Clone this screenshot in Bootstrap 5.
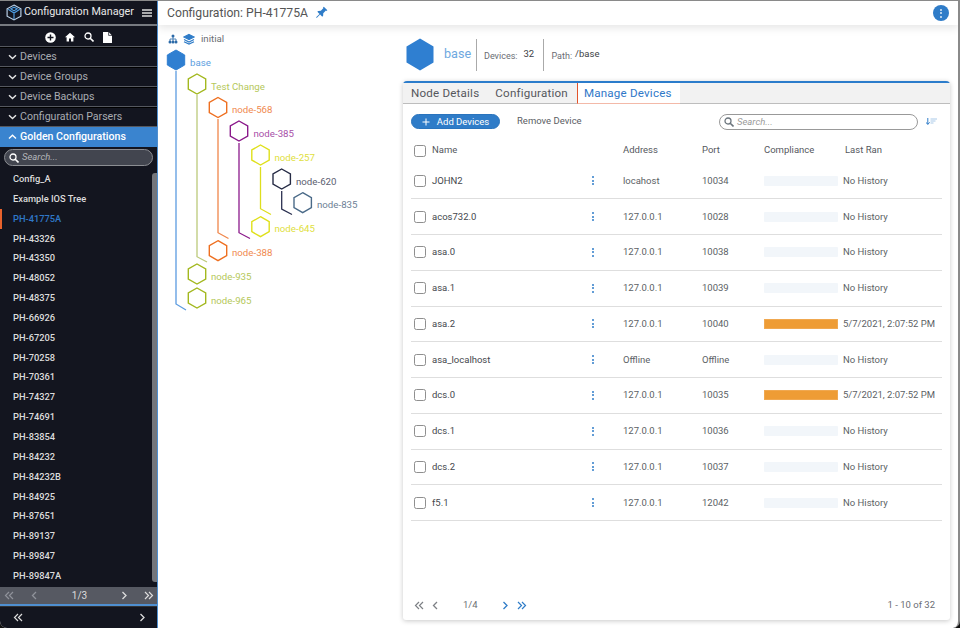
<!DOCTYPE html>
<html lang="en"><head><meta charset="utf-8"><title>Configuration Manager</title>
<link href="https://cdn.jsdelivr.net/npm/bootstrap@5.3.0/dist/css/bootstrap.min.css" rel="stylesheet">
<style>
html,body{height:628px;overflow:hidden;background:#111}
body{font-family:Roboto,"Liberation Sans",sans-serif;color:#4a4d55}
.app-shell{height:628px;width:960px;border-radius:0 0 7px 7px;overflow:hidden;background:#fff;border-top:1px solid #8a8a8a;border-right:2px solid #8a8a8a}
.side{width:158px;flex:none;background:#13151f;color:#e6e6e6;border-right:1px solid #4f8fd0}
.side-title{height:23px;padding:0 5px 0 6px;border-bottom:2px solid #777a80;font-size:10.8px;color:#e8e8e8;box-sizing:content-box}
.logo-ic{margin-right:2px;flex:none}
.side-tools{height:20px;border-bottom:1px solid #55585f;margin-top:1px;gap:9px;padding-top:1px}
.acc{height:20px;padding-left:8px;gap:3px;font-size:10.6px;color:#a9acb2;border-bottom:1px solid #55585f;border-top:1px solid #000}
.acc-on{background:#3a84cf;color:#fff;font-weight:500;border-color:#3a84cf}
.side-search{margin:2px 4px 0;height:17px;border:1px solid #8b8d92;border-radius:9px;background:#42454f;padding-left:4px;gap:3px;font-size:9.5px;font-style:italic;color:#b4b6ba}
.side-body{flex:1;min-height:0;position:relative}
.tree-list{padding-top:3px;background:transparent}
.tree-list .list-group-item{background:transparent;border:0;border-radius:0;color:#dcdcdc;font-size:9.3px;font-weight:500;height:19.85px;line-height:19.85px;padding:0 0 0 13px}
.tree-list .list-group-item.active{color:#2f78c8;box-shadow:inset 2px 0 0 #e8622c;margin:0}
.thumb{position:absolute;right:0;top:7px;width:5px;bottom:5px;background:#74767b;border-radius:3px 0 0 3px}
.side-pager{height:17px;background:#565962;font-size:10px;color:#ddd;border-bottom:2px solid #4f8fd0;box-sizing:content-box;padding:0 3px 0 4px}
.pg-gap-a{margin-left:17px}.pg-gap-b{margin-left:auto}.pg-gap-c{margin-left:auto}.pg-gap-d{margin-left:16px}
.side-foot{height:22px;padding:0 11px 0 13px;color:#ddd;border-top:1px solid #333}
.dim{color:#8f929a}
.main-area{min-width:0;position:relative}
.top-bar{height:24px;padding:0 9px;box-shadow:0 3px 8px rgba(0,0,0,.1);font-size:12.2px;color:#555;position:relative;z-index:2}
.pin-ic{margin-left:6px}
.kebab-btn{width:16px;height:16px;border-radius:50%;background:#2f7cc8;gap:1.5px}
.kebab-btn i,.kebab i{display:block;width:2px;height:2px;border-radius:50%}
.kebab-btn i{background:#dce9f6}
.kebab{gap:1.5px;width:2px;margin-left:5px}.kebab i{background:#2f7cc8}
.work{flex:1;min-height:0}
.tree-pane{width:245px;flex:none}
.detail{width:547px;margin-left:0;padding-top:13px}
.node-head{height:33px;margin-bottom:10px;margin-left:3px;font-size:9px;color:#6a6d73}
.node-name{font-size:12.6px;color:#6ea8e0;margin-left:10px;width:32px}
.vsep{width:1px;height:32px;background:#aaa}
.node-lab{padding-top:4px;margin:0 6px 0 7px}
.node-lab-b{margin:0 3px 0 7px;padding-top:4px}
.node-val{color:#3d3f45;font-size:9.5px}
.val-wide{width:20px}
.panel-card{height:539px;border:0;border-top:2px solid #2b7ccb;border-radius:4px 4px 3px 3px;box-shadow:0 1px 5px rgba(0,0,0,.22)}
.tab-strip{height:21px;background:#f2f2f2;border-bottom:1px solid #bdbdbd;font-size:11.6px;color:#55575c;letter-spacing:.2px}
.tab-strip .nav-link{color:#55575c;padding:0;line-height:20px;border:0;border-radius:0;background:transparent;height:20px;font-size:inherit}
.tab-strip .nav-link.active{color:#2f78c8;background:#fff;border-left:1px solid #e2542c;padding:0 8px 0 6px;border-bottom:1px solid #f3b9a8;margin-bottom:-1px;height:21px}
.tab-b{margin-left:16px}.tab-c{margin-left:9px}
.tools{padding:10px 8px 0 8px;height:34px}
.add-btn{height:15px;width:89px;background:#2f7cc8;color:#fff;font-size:9.5px;padding:0;border:1px solid #2a74bd;border-radius:8px;line-height:13px;gap:7px}
.link-btn{font-size:9.5px;color:#5a5d63;margin-left:17px}
.find{width:199px;height:16px;margin-left:auto;border:1px solid #999;border-radius:8px;padding-left:4px;gap:3px;font-size:9.5px;font-style:italic;color:#9a9a9a}
.sort-ic{margin:0 5px 0 8px}
.dev-table{width:531px;table-layout:fixed;margin:0 0 0 8px;font-size:9.5px;color:#5c5f65}
.dev-table th,.dev-table td{padding:0;vertical-align:middle;background:transparent;color:inherit}
.dev-table thead th{height:25px;font-weight:400;color:#55585e;border:0;font-size:9.5px}
.dev-table tbody td{height:35.75px;border-bottom:1px solid #dedede}
.dev-table .nm{color:#44474d}
.dev-table .ran-head{padding-left:2px}
.c1{width:21px}.c2{width:155px}.c3{width:36px}.c4{width:79px}.c5{width:62px}.c6{width:79px}.c7{width:99px}
.cbx{width:12px;height:12px;margin:0 0 0 3px;display:block;border:1px solid #8f8f8f;border-radius:2px;background:#fff;box-shadow:none}
.meter{height:10px;width:74px;background:#f2f6fa;border-radius:1px}
.meter .progress-bar{background:#ee9c35;box-shadow:inset 0 0 0 1px #f0a850}
.pager{margin-top:auto;padding:0 15px 0 11px;font-size:9.5px;color:#6a6d73;height:30px}
.pg-a{color:#7d8085}.pg-b{color:#2f7cc8}
.pg-m{margin-left:24px}.pg-n{margin-left:24px}
.tree-svg{display:block}
.tree-svg text{font-family:Roboto,"Liberation Sans",sans-serif;font-size:9.7px}
</style></head>
<body>
<svg width="0" height="0" class="position-absolute"><defs>
<path id="hx" d="M0-10 8.700-5V5L0 10-8.700 5V-5Z"/>
<path id="chev-d" d="M1 1.200 4.500 4.500 8 1.200" fill="none" stroke="currentColor" stroke-width="1.400"/>
<path id="chev-u" d="M1 4.500 4.500 1.200 8 4.500" fill="none" stroke="currentColor" stroke-width="1.400"/>
<g id="glass" fill="none" stroke="currentColor" stroke-width="1.300"><circle cx="4" cy="4" r="3"/><path d="M6.200 6.200 9.500 9.500" stroke-width="1.600"/></g>
<path id="dbl-l" d="M5 1 1.500 4.500 5 8M9 1 5.500 4.500 9 8" fill="none" stroke="currentColor" stroke-width="1.200"/>
<path id="dbl-r" d="M1 1 4.500 4.500 1 8M5 1 8.500 4.500 5 8" fill="none" stroke="currentColor" stroke-width="1.200"/>
<path id="one-l" d="M5 1 1.500 4.500 5 8" fill="none" stroke="currentColor" stroke-width="1.300"/>
<path id="one-r" d="M1.500 1 5 4.500 1.500 8" fill="none" stroke="currentColor" stroke-width="1.300"/>
</defs></svg>
<div class="app-shell d-flex">
<aside class="side d-flex flex-column">
  <div class="side-title d-flex align-items-center">
    <svg width="16" height="17" viewBox="0 0 15 16" class="logo-ic"><path d="M7.500 1 14 4.500V11.500L7.500 15 1 11.500V4.500Z" fill="none" stroke="#bcd3ea" stroke-width="1.100"/><path d="M2 5 7.500 8.500 13 5M7.500 8.500V14M4.500 4.500 7.500 3 10.500 4.500 7.500 6.500Z" fill="none" stroke="#4d9ce0" stroke-width="1.100"/></svg>
    <span class="flex-grow-1 text-nowrap">Configuration Manager</span>
    <svg width="10" height="8" viewBox="0 0 10 8"><path d="M0 1H10M0 4H10M0 7H10" stroke="#ddd" stroke-width="1.400"/></svg>
  </div>
  <div class="side-tools d-flex align-items-center justify-content-center">
    <svg width="11" height="11" viewBox="0 0 11 11"><circle cx="5.500" cy="5.500" r="5.300" fill="#fff"/><path d="M5.500 2.500V8.500M2.500 5.500H8.500" stroke="#13151f" stroke-width="1.400"/></svg>
    <svg width="10" height="10" viewBox="0 0 10 10"><path d="M5 .8 0 5.300H1.600V9.500H4V6.500H6V9.500H8.400V5.300H10Z" fill="#fff"/></svg>
    <svg width="10" height="10" viewBox="0 0 10 10" class="text-white"><use href="#glass"/></svg>
    <svg width="9" height="11" viewBox="0 0 9 11"><path d="M0 0H5.600L9 3.400V11H0Z" fill="#fff"/><path d="M5.600 0V3.400H9" fill="none" stroke="#13151f" stroke-width=".7"/></svg>
  </div>
  <div class="acc d-flex align-items-center"><svg width="9" height="6" viewBox="0 0 9 6"><use href="#chev-d" color="#e6e6e6"/></svg>Devices</div>
  <div class="acc d-flex align-items-center"><svg width="9" height="6" viewBox="0 0 9 6"><use href="#chev-d" color="#e6e6e6"/></svg>Device Groups</div>
  <div class="acc d-flex align-items-center"><svg width="9" height="6" viewBox="0 0 9 6"><use href="#chev-d" color="#e6e6e6"/></svg>Device Backups</div>
  <div class="acc d-flex align-items-center"><svg width="9" height="6" viewBox="0 0 9 6"><use href="#chev-d" color="#e6e6e6"/></svg><span class="text-nowrap">Configuration Parsers</span></div>
  <div class="acc acc-on d-flex align-items-center"><svg width="9" height="6" viewBox="0 0 9 6"><use href="#chev-u"/></svg><span class="text-nowrap">Golden Configurations</span></div>
  <div class="side-search d-flex align-items-center"><svg width="10" height="10" viewBox="0 0 10 10" class="text-white"><use href="#glass"/></svg>Search...</div>
  <div class="side-body">
    <div class="thumb"></div>
    <div class="list-group tree-list">
      <a class="list-group-item">Config_A</a><a class="list-group-item">Example IOS Tree</a><a class="list-group-item active">PH-41775A</a>
      <a class="list-group-item">PH-43326</a><a class="list-group-item">PH-43350</a><a class="list-group-item">PH-48052</a><a class="list-group-item">PH-48375</a>
      <a class="list-group-item">PH-66926</a><a class="list-group-item">PH-67205</a><a class="list-group-item">PH-70258</a><a class="list-group-item">PH-70361</a>
      <a class="list-group-item">PH-74327</a><a class="list-group-item">PH-74691</a><a class="list-group-item">PH-83854</a><a class="list-group-item">PH-84232</a>
      <a class="list-group-item">PH-84232B</a><a class="list-group-item">PH-84925</a><a class="list-group-item">PH-87651</a><a class="list-group-item">PH-89137</a>
      <a class="list-group-item">PH-89847</a><a class="list-group-item">PH-89847A</a>
    </div>
  </div>
  <div class="side-pager d-flex align-items-center">
    <svg width="10" height="9" viewBox="0 0 10 9" class="dim"><use href="#dbl-l"/></svg>
    <svg width="7" height="9" viewBox="0 0 7 9" class="dim pg-gap-a"><use href="#one-l"/></svg>
    <span class="pg-gap-b">1/3</span>
    <svg width="7" height="9" viewBox="0 0 7 9" class="pg-gap-c"><use href="#one-r"/></svg>
    <svg width="10" height="9" viewBox="0 0 10 9" class="pg-gap-d"><use href="#dbl-r"/></svg>
  </div>
  <div class="side-foot d-flex align-items-center justify-content-between">
    <svg width="10" height="9" viewBox="0 0 10 9"><use href="#dbl-l"/></svg>
    <svg width="7" height="9" viewBox="0 0 7 9"><use href="#one-r"/></svg>
  </div>
</aside>
<main class="main-area flex-grow-1 d-flex flex-column">
  <header class="top-bar d-flex align-items-center bg-white">
    <span>Configuration: PH-41775A</span>
    <svg width="14" height="14" viewBox="0 0 14 14" class="pin-ic"><g transform="rotate(45 7 7)"><path d="M4.500 .5H9.500V1.800H8.700V5.500L10.500 7.500V8.700H7.400V13.500H6.600V8.700H3.500V7.500L5.300 5.500V1.800H4.500Z" fill="#2f7cc8"/></g></svg>
    <div class="kebab-btn d-flex flex-column align-items-center justify-content-center ms-auto"><i></i><i></i><i></i></div>
  </header>
  <div class="work d-flex">
    <div class="tree-pane">
      <svg class="tree-svg" width="245" height="310" viewBox="158 25 245 310">
        <g fill="none" stroke-width="1.300">
          <path d="M176 71V304L186 310" stroke="#5b9be0"/>
          <path d="M197 95V256.700L207 262" stroke="#bcc97a"/>
          <path d="M218 119V232.700L228.500 238.500" stroke="#f0864a"/>
          <path d="M239 143V232.700L250 238.500" stroke="#8b1a8b"/>
          <path d="M260.500 167V208.700L271 214.500" stroke="#dede1e"/>
          <path d="M281.700 191V209L292 214.500" stroke="#2a3050"/>
        </g>
        <g fill="#2b6aa8"><circle cx="173" cy="36" r="1.500"/><circle cx="170" cy="42" r="1.500"/><circle cx="173" cy="42" r="1.500"/><circle cx="176" cy="42" r="1.500"/></g>
        <path d="M173 36V42M173 39H170V42M173 39H176V42" stroke="#2b6aa8" fill="none" stroke-width=".8"/>
        <g fill="none" stroke="#2f7cc8" stroke-width="1.200"><path d="M189 34.500 194 37 189 39.500 184 37Z" fill="#2f7cc8"/><path d="M184 39.500 189 42 194 39.500M184 41.700 189 44 194 41.700"/></g>
        <text x="201" y="42" fill="#6a6d73">initial</text>
        <use href="#hx" transform="translate(176 60)" fill="#2f7fd1" stroke="#2f7fd1"/>
        <g fill="#fff" stroke-width="1.400">
          <use href="#hx" transform="translate(197 84)" stroke="#a3b81f"/>
          <use href="#hx" transform="translate(218 107.500)" stroke="#ee6f20"/>
          <use href="#hx" transform="translate(239 131)" stroke="#8b1a8b"/>
          <use href="#hx" transform="translate(260.500 155)" stroke="#dfe01a"/>
          <use href="#hx" transform="translate(281.700 179)" stroke="#262b45"/>
          <use href="#hx" transform="translate(302.700 202.700)" stroke="#4a6a88"/>
          <use href="#hx" transform="translate(260.500 226.700)" stroke="#dfe01a"/>
          <use href="#hx" transform="translate(218 250.700)" stroke="#ee6f20"/>
          <use href="#hx" transform="translate(197 274)" stroke="#a3b81f"/>
          <use href="#hx" transform="translate(197 298)" stroke="#a3b81f"/>
        </g>
        <text x="190" y="65.500" fill="#5b9ee0">base</text>
        <text x="211" y="89.500" fill="#b5c85a">Test Change</text>
        <text x="232" y="113" fill="#f08a50">node-568</text>
        <text x="253.500" y="136.500" fill="#a84fa8">node-385</text>
        <text x="274.500" y="160.500" fill="#e0e040">node-257</text>
        <text x="296" y="184.500" fill="#5c6070">node-620</text>
        <text x="317" y="208.200" fill="#6d8196">node-835</text>
        <text x="274.500" y="232.200" fill="#e0e040">node-645</text>
        <text x="232" y="256.200" fill="#f08a50">node-388</text>
        <text x="211" y="279.500" fill="#b5c85a">node-935</text>
        <text x="211" y="303.500" fill="#b5c85a">node-965</text>
      </svg>
    </div>
    <section class="detail d-flex flex-column">
      <div class="node-head d-flex align-items-center">
        <svg width="28" height="33" viewBox="0 0 28 33"><path d="M14 .500 27.500 8.500V24.500L14 32.500 .5 24.500V8.500Z" fill="#2f7fd1"/></svg>
        <span class="node-name">base</span>
        <span class="vsep"></span>
        <span class="node-lab">Devices:</span><span class="node-val val-wide">32</span>
        <span class="vsep"></span>
        <span class="node-lab-b">Path:</span><span class="node-val">/base</span>
      </div>
      <div class="card panel-card">
        <ul class="nav tab-strip">
          <li class="nav-item ms-2"><a class="nav-link">Node Details</a></li>
          <li class="nav-item tab-b"><a class="nav-link">Configuration</a></li>
          <li class="nav-item tab-c"><a class="nav-link active">Manage Devices</a></li>
        </ul>
        <div class="tools d-flex align-items-start">
          <button class="btn add-btn d-inline-flex align-items-center justify-content-center"><svg width="8" height="8" viewBox="0 0 8 8"><path d="M4 .5V7.500M.5 4H7.500" stroke="#fff" stroke-width="1"/></svg>Add Devices</button>
          <span class="link-btn">Remove Device</span>
          <div class="find d-flex align-items-center"><svg width="10" height="10" viewBox="0 0 10 10" class="text-secondary"><use href="#glass"/></svg>Search...</div>
          <svg class="sort-ic mt-1" width="11" height="7" viewBox="0 0 11 7"><path d="M1.800 0V6M0 4.300 1.800 6.500 3.600 4.300" fill="none" stroke="#2f7cc8"/><path d="M4.500 1H11M4.500 3H9.500M4.500 5H7.500" stroke="#a9c9e8"/></svg>
        </div>
        <table class="table dev-table">
          <colgroup><col class="c1"><col class="c2"><col class="c3"><col class="c4"><col class="c5"><col class="c6"><col class="c7"></colgroup>
          <thead><tr><th><input class="form-check-input cbx" type="checkbox"></th><th>Name</th><th></th><th>Address</th><th>Port</th><th>Compliance</th><th class="ran-head">Last Ran</th></tr></thead>
          <tbody>
            <tr><td><input class="form-check-input cbx" type="checkbox"></td><td class="nm">JOHN2</td><td><div class="kebab d-flex flex-column"><i></i><i></i><i></i></div></td><td>locahost</td><td>10034</td><td><div class="progress meter"></div></td><td>No History</td></tr>
            <tr><td><input class="form-check-input cbx" type="checkbox"></td><td class="nm">acos732.0</td><td><div class="kebab d-flex flex-column"><i></i><i></i><i></i></div></td><td>127.0.0.1</td><td>10028</td><td><div class="progress meter"></div></td><td>No History</td></tr>
            <tr><td><input class="form-check-input cbx" type="checkbox"></td><td class="nm">asa.0</td><td><div class="kebab d-flex flex-column"><i></i><i></i><i></i></div></td><td>127.0.0.1</td><td>10038</td><td><div class="progress meter"></div></td><td>No History</td></tr>
            <tr><td><input class="form-check-input cbx" type="checkbox"></td><td class="nm">asa.1</td><td><div class="kebab d-flex flex-column"><i></i><i></i><i></i></div></td><td>127.0.0.1</td><td>10039</td><td><div class="progress meter"></div></td><td>No History</td></tr>
            <tr><td><input class="form-check-input cbx" type="checkbox"></td><td class="nm">asa.2</td><td><div class="kebab d-flex flex-column"><i></i><i></i><i></i></div></td><td>127.0.0.1</td><td>10040</td><td><div class="progress meter"><div class="progress-bar" style="width:100%"></div></div></td><td class="text-nowrap">5/7/2021, 2:07:52 PM</td></tr>
            <tr><td><input class="form-check-input cbx" type="checkbox"></td><td class="nm">asa_localhost</td><td><div class="kebab d-flex flex-column"><i></i><i></i><i></i></div></td><td>Offline</td><td>Offline</td><td><div class="progress meter"></div></td><td>No History</td></tr>
            <tr><td><input class="form-check-input cbx" type="checkbox"></td><td class="nm">dcs.0</td><td><div class="kebab d-flex flex-column"><i></i><i></i><i></i></div></td><td>127.0.0.1</td><td>10035</td><td><div class="progress meter"><div class="progress-bar" style="width:100%"></div></div></td><td class="text-nowrap">5/7/2021, 2:07:52 PM</td></tr>
            <tr><td><input class="form-check-input cbx" type="checkbox"></td><td class="nm">dcs.1</td><td><div class="kebab d-flex flex-column"><i></i><i></i><i></i></div></td><td>127.0.0.1</td><td>10036</td><td><div class="progress meter"></div></td><td>No History</td></tr>
            <tr><td><input class="form-check-input cbx" type="checkbox"></td><td class="nm">dcs.2</td><td><div class="kebab d-flex flex-column"><i></i><i></i><i></i></div></td><td>127.0.0.1</td><td>10037</td><td><div class="progress meter"></div></td><td>No History</td></tr>
            <tr><td><input class="form-check-input cbx" type="checkbox"></td><td class="nm">f5.1</td><td><div class="kebab d-flex flex-column"><i></i><i></i><i></i></div></td><td>127.0.0.1</td><td>12042</td><td><div class="progress meter"></div></td><td>No History</td></tr>
          </tbody>
        </table>
        <div class="pager d-flex align-items-center">
          <svg width="10" height="9" viewBox="0 0 10 9" class="pg-a"><use href="#dbl-l"/></svg>
          <svg width="7" height="9" viewBox="0 0 7 9" class="pg-a ms-2"><use href="#one-l"/></svg>
          <span class="pg-m">1/4</span>
          <svg width="7" height="9" viewBox="0 0 7 9" class="pg-b pg-n"><use href="#one-r"/></svg>
          <svg width="10" height="9" viewBox="0 0 10 9" class="pg-b ms-2"><use href="#dbl-r"/></svg>
          <span class="ms-auto">1 - 10 of 32</span>
        </div>
      </div>
    </section>
  </div>
</main>
</div>
<script src="https://cdn.jsdelivr.net/npm/bootstrap@5.3.0/dist/js/bootstrap.bundle.min.js"></script>
</body></html>
